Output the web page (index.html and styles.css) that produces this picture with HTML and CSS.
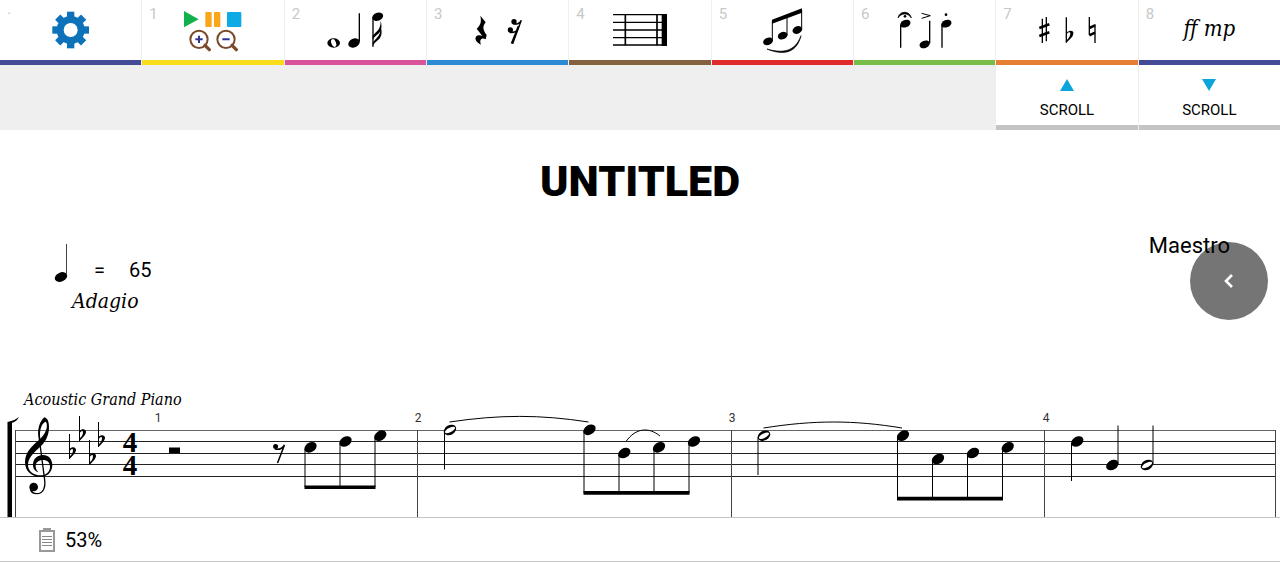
FILE: index.html
```html
<!DOCTYPE html>
<html lang="en">
<head>
    <meta charset="UTF-8">
    <meta name="viewport" content="width=device-width, initial-scale=1.0">
    <title>Untitled</title>
    <link rel="stylesheet" href="styles.css">
</head>
<body>
    <nav class="toolbar">
        <button class="tool navy" aria-label="Settings">
            <span class="key">·</span>
            <svg class="icon" viewBox="93 0 240 180">
                <g fill="#0d72b9">
                    <circle cx="212" cy="90" r="42"/>
                    <g id="teeth">
                        <rect x="201" y="35" width="22" height="110"/>
                        <rect x="157" y="79" width="110" height="22"/>
                    </g>
                    <use href="#teeth" transform="rotate(45 212 90)"/>
                </g>
                <circle cx="212" cy="90" r="21" fill="#fff"/>
            </svg>
        </button>
        <button class="tool yellow" aria-label="Playback and zoom">
            <span class="key">1</span>
            <svg class="icon" viewBox="519 0 240 180">
                <path d="M552 33L596 58L552 82Z" fill="#11b14b"/>
                <rect x="616" y="36" width="19" height="45" rx="3" fill="#faa61a"/>
                <rect x="642" y="36" width="19" height="45" rx="3" fill="#faa61a"/>
                <rect x="681" y="36" width="43" height="45" rx="3" fill="#0eaae6"/>
                <g fill="none" stroke="#7b4a2b">
                    <circle cx="597" cy="118" r="26" stroke-width="6"/>
                    <path d="M615 136L628 149" stroke-width="10" stroke-linecap="round"/>
                    <circle cx="678" cy="118" r="26" stroke-width="6"/>
                    <path d="M696 136L709 149" stroke-width="10" stroke-linecap="round"/>
                </g>
                <path d="M586 118H608M597 107V129M667 118H689" stroke="#2f3590" stroke-width="6"/>
            </svg>
        </button>
        <button class="tool pink" aria-label="Notes">
            <span class="key">2</span>
            <svg class="icon" viewBox="93 0 240 180">
                <ellipse cx="149" cy="129" rx="19" ry="14"/>
                <ellipse cx="149" cy="129" rx="7" ry="12" fill="#fff" transform="rotate(-20 149 129)"/>
                <ellipse cx="210" cy="129" rx="18" ry="13" transform="rotate(-25 210 129)"/>
                <path d="M226 125V40" stroke="#000" stroke-width="4"/>
                <ellipse cx="281" cy="50" rx="17" ry="12" transform="rotate(-20 281 50)"/>
                <path d="M267 52V140" stroke="#000" stroke-width="4"/>
                <path d="M266 108C272 96 291 92 290 62C296 84 290 96 281 103C275 108 270 112 266 119ZM266 130C271 116 292 110 290 80C297 101 290 114 282 120C275 126 270 131 266 138Z"/>
            </svg>
        </button>
        <button class="tool blue" aria-label="Rests">
            <span class="key">3</span>
            <svg class="icon" viewBox="521 0 240 180">
                <path d="M588 47L604 67C595 79 594 88 607 105L604 118C592 112 584 119 590 134C576 126 570 117 575 110C579 105 588 105 594 108L577 86C589 75 592 65 588 47Z"/>
                <circle cx="689" cy="65" r="8"/>
                <circle cx="678" cy="90" r="8"/>
                <path d="M687 72C698 74 706 70 711 61L685 131" fill="none" stroke="#000" stroke-width="4"/>
                <path d="M676 97C687 99 695 96 701 88" fill="none" stroke="#000" stroke-width="4"/>
                <path d="M682 131L703 78" stroke="#000" stroke-width="6"/>
            </svg>
        </button>
        <button class="tool brown" aria-label="Bars">
            <span class="key">4</span>
            <svg class="icon" viewBox="96 0 240 180">
                <path d="M135 44H296M135 67H296M135 90H296M135 113H296M135 135H296" stroke="#000" stroke-width="4"/>
                <path d="M172 43V136M267 43V136" stroke="#000" stroke-width="5"/>
                <rect x="281" y="42" width="16" height="96"/>
            </svg>
        </button>
        <button class="tool red" aria-label="Beams and slurs">
            <span class="key">5</span>
            <svg class="icon" viewBox="521 0 240 180">
                <path d="M611 59L701 25V38L611 71Z"/>
                <path d="M612 62V124M656 48V106M700 30V90" stroke="#000" stroke-width="3"/>
                <ellipse cx="599" cy="124" rx="15" ry="11" transform="rotate(-22 599 124)"/>
                <ellipse cx="643" cy="107" rx="15" ry="11" transform="rotate(-22 643 107)"/>
                <ellipse cx="687" cy="90" rx="15" ry="11" transform="rotate(-22 687 90)"/>
                <path d="M596 147C640 160 680 157 698 107C684 166 636 164 596 147Z" stroke="#000" stroke-width="2"/>
            </svg>
        </button>
        <button class="tool green" aria-label="Articulations">
            <span class="key">6</span>
            <svg class="icon" viewBox="104 0 240 180">
                <path d="M143 54C147 31 179 31 183 54C174 38 152 38 143 54Z" stroke="#000" stroke-width="2"/>
                <circle cx="164" cy="49" r="4"/>
                <ellipse cx="165" cy="71" rx="16" ry="11" transform="rotate(-22 165 71)"/>
                <path d="M151 74V143M238 62V130M275 74V143" stroke="#000" stroke-width="4"/>
                <path d="M214 40L240 47L214 55" fill="none" stroke="#000" stroke-width="3"/>
                <ellipse cx="223" cy="133" rx="16" ry="11" transform="rotate(-22 223 133)"/>
                <circle cx="287" cy="44" r="4"/>
                <ellipse cx="288" cy="71" rx="16" ry="11" transform="rotate(-22 288 71)"/>
            </svg>
        </button>
        <button class="tool orange" aria-label="Accidentals">
            <span class="key">7</span>
            <svg class="icon" viewBox="530 0 240 180">
                <path d="M576 56V129M588 51V124" stroke="#000" stroke-width="4"/>
                <path d="M567 84L597 73M567 108L597 97" stroke="#000" stroke-width="8"/>
                <path d="M648 52V128M717 51V105M734 73V129" stroke="#000" stroke-width="4"/>
                <path d="M649 97C660 88 671 92 669 101C667 113 656 118 649 128V121C660 112 662 98 658 97C654 96 651 99 649 103Z"/>
                <path d="M717 84L734 76M717 106L734 98" stroke="#000" stroke-width="8"/>
            </svg>
        </button>
        <button class="tool navy" aria-label="Dynamics">
            <span class="key">8</span>
            <span class="dynamics">ff mp</span>
        </button>
    </nav>

    <div class="subbar">
        <button class="scroll scroll-up">
            <svg class="arrow" viewBox="0 0 14 12"><path d="M7 0L14 12H0Z"/></svg>
            SCROLL
        </button>
        <button class="scroll">
            <svg class="arrow" viewBox="0 0 14 12"><path d="M0 0H14L7 12Z"/></svg>
            SCROLL
        </button>
    </div>

    <main class="score">
        <h1 class="title">UNTITLED</h1>
        <div class="credits">
            <div class="tempo">
                <div class="metronome">
                    <svg class="tempo-note" viewBox="0 0 14 40">
                        <ellipse cx="7" cy="33" rx="6.500" ry="4.500" transform="rotate(-25 7 33)"/>
                        <path d="M12.500 0V31" stroke="#444"/>
                    </svg>
                    <span class="equals">=</span>
                    <span>65</span>
                </div>
                <div class="tempo-name">Adagio</div>
            </div>
            <div class="composer">Maestro</div>
        </div>
        <button class="fab" aria-label="Open panel">
            <svg class="chevron" viewBox="0 0 10 16"><path d="M8 2L2 8L8 14" fill="none" stroke="#fff" stroke-width="2.6"/></svg>
        </button>

        <div class="instrument">Acoustic Grand Piano</div>
        <svg class="staff" viewBox="0 0 1280 107">
            <defs>
                <ellipse id="head" rx="6.6" ry="4.8" transform="rotate(-32)"/>
                <g id="half">
                    <ellipse rx="6.6" ry="4.8" transform="rotate(-30)"/>
                    <ellipse rx="5.6" ry="2.2" fill="#fff" transform="rotate(-27)"/>
                </g>
                <g id="flat">
                    <path d="M.5 -25V0" stroke="#000"/>
                    <path d="M.5 -10C3 -13 7.500 -12 7 -8.500C6 -5 3 -3 .5 0V-2.500C4 -5 4.500 -9 3.500 -10C2.500 -10.500 1.500 -9 .5 -8Z"/>
                </g>
            </defs>

            <!-- staff and bar lines -->
            <path d="M15 20.500H1276" stroke="#666"/>
            <path d="M15 31.500H1276M15 43.500H1276M15 54.500H1276M15 66.500H1276" stroke="#222"/>
            <path d="M15.500 20V107M417.500 20V107M731.500 20V107M1044.500 20V107M1275.500 20V107" stroke="#444"/>
            <path d="M7.500 107V12C13 11 16 9 19 7C17 11 14 12 12 13V107Z"/>

            <!-- treble clef -->
            <g transform="translate(0 -25) scale(.33333)">
                <path fill-rule="evenodd" d="M133 97C120 108 112 130 115 155L117 165C95 183 75 203 75 232C75 258 95 276 120 276C142 276 157 261 157 240C157 222 145 210 129 210C112 210 99 222 99 239C99 251 106 259 115 262C109 255 107 249 107 242C107 233 116 225 129 225C142 225 150 233 150 245C150 261 138 271 121 271C101 271 84 259 84 240C84 218 104 201 122 184C138 169 147 150 147 126C147 112 143 99 133 97ZM136 110C141 112 142 122 139 133C135 146 128 154 121 161C118 140 122 118 136 110Z"/>
                <path d="M118 162L134 285C137 310 128 326 111 326C100 326 93 320 91 312" fill="none" stroke="#000" stroke-width="4"/>
                <circle cx="101" cy="306" r="13"/>
            </g>

            <!-- key and time signature -->
            <use href="#flat" x="69" y="49"/>
            <use href="#flat" x="79" y="31"/>
            <use href="#flat" x="89" y="55"/>
            <use href="#flat" x="98" y="37"/>
            <text class="meter" x="130" y="42">4</text>
            <text class="meter" x="130" y="65">4</text>

            <g class="bar-number">
                <text x="158" y="12">1</text>
                <text x="418" y="12">2</text>
                <text x="732" y="12">3</text>
                <text x="1046" y="12">4</text>
            </g>

            <!-- bar 1 -->
            <path d="M169 37.500H180V43H169Z"/>
            <circle cx="275.600" cy="36.500" r="2.500"/>
            <path d="M275 39C279 40 282 39 284.500 35L277.500 53" fill="none" stroke="#000" stroke-width="1.500"/>
            <use href="#head" x="310.500" y="37.300"/>
            <use href="#head" x="345.500" y="31.500"/>
            <use href="#head" x="380.300" y="25.700"/>
            <path class="stem" d="M305 39V77M340 33V77M375 27V77"/>
            <path d="M304.500 75.500H375.500V79H304.500Z"/>

            <!-- bar 2 -->
            <use href="#half" x="450" y="20"/>
            <use href="#head" x="589.500" y="19.800"/>
            <use href="#head" x="624.300" y="43"/>
            <use href="#head" x="659" y="37.300"/>
            <use href="#head" x="694" y="31.500"/>
            <path class="stem" d="M444.500 21V59.500M584 21V83M619 45V83M654 39V83M689 33V83"/>
            <path d="M583.500 81H689.500V84.700H583.500Z"/>
            <path class="slur" d="M449.500 12C500 4.500 540 4.500 588.500 12M626 31.500C636 17.500 649 17 660 26"/>

            <!-- bar 3 -->
            <use href="#half" x="764" y="25.700"/>
            <use href="#head" x="903" y="25.700"/>
            <use href="#head" x="938" y="49"/>
            <use href="#head" x="973" y="43"/>
            <use href="#head" x="1007.700" y="37.300"/>
            <path class="stem" d="M758 27V65M897.500 27V88M932.500 51V88M967.500 45V88M1002.500 39V88"/>
            <path d="M897 86.700H1003V90.500H897Z"/>
            <path class="slur" d="M763.500 18C814 10 854 10 902 18"/>

            <!-- bar 4 -->
            <use href="#head" x="1077.300" y="31.500"/>
            <use href="#head" x="1112.300" y="55"/>
            <use href="#half" x="1147" y="55"/>
            <path class="stem" d="M1071.500 33V71M1118 15.500V54M1153 15.500V54"/>
        </svg>
    </main>

    <footer class="status">
        <svg class="battery" viewBox="0 0 16 24">
            <path d="M4 0H12V2H4Z" fill="#999"/>
            <path d="M1 3H15V23H1Z" fill="none" stroke="#999" stroke-width="2"/>
            <path d="M3 8.500H13M3 11.500H13M3 14.500H13M3 17.500H13" stroke="#888"/>
        </svg>
        <span>53%</span>
    </footer>
</body>
</html>
```
FILE: styles.css
```css
:root {
  --navy: #434a97;
  --yellow: #f9dd1c;
  --pink: #d9539b;
  --blue: #2d89d3;
  --brown: #86613f;
  --red: #e02b2a;
  --green: #78bd48;
  --orange: #e67e33;
  --line: #c4c4c4;
}
* {
  box-sizing: border-box;
}
body {
  margin: 0;
  font-family: Roboto, sans-serif;
  color: #000;
  background-color: #fff;
}
button {
  border: none;
  margin: 0;
  padding: 0;
  font-family: inherit;
  color: inherit;
  cursor: pointer;
}
.toolbar, .subbar {
  display: grid;
  grid-template-columns: repeat(9, 1fr);
  column-gap: 1px;
  background-color: #efefef;
}
.tool {
  position: relative;
  display: flex;
  align-items: center;
  justify-content: center;
  height: 65px;
  background-color: #fff;
  border-bottom: 5px solid;
}
.navy { border-color: var(--navy); }
.yellow { border-color: var(--yellow); }
.pink { border-color: var(--pink); }
.blue { border-color: var(--blue); }
.brown { border-color: var(--brown); }
.red { border-color: var(--red); }
.green { border-color: var(--green); }
.orange { border-color: var(--orange); }
.key {
  position: absolute;
  top: 5px;
  left: 7px;
  font-size: 15px;
  line-height: 18px;
  color: #c8c8c8;
}
.icon {
  width: 80px;
  height: 60px;
}
.dynamics {
  padding-bottom: 4px;
  font-family: "DejaVu Serif Condensed", "DejaVu Serif", serif;
  font-size: 22px;
  font-style: italic;
}
.scroll {
  display: flex;
  flex-direction: column;
  align-items: center;
  height: 65px;
  padding-top: 14px;
  gap: 10px;
  font-size: 15px;
  line-height: 18px;
  background-color: #fff;
  border-bottom: 5px solid var(--line);
}
.scroll-up {
  grid-column: 8;
}
.arrow {
  width: 14px;
  height: 12px;
  fill: #0ba5dc;
}

/* score */
.score {
  position: relative;
  padding-top: 25px;
}
.title {
  margin: 0 0 26px;
  font-size: 43px;
  line-height: 52px;
  font-weight: 900;
  text-align: center;
}
.credits {
  display: flex;
  justify-content: space-between;
  height: 157px;
  padding: 0 50px;
}
.tempo {
  padding-top: 9px;
}
.metronome {
  display: flex;
  align-items: center;
  height: 44px;
  padding: 0 4px;
  font-size: 20px;
  line-height: 24px;
}
.metronome span {
  margin-top: 12px;
}
.tempo-note {
  width: 14px;
  height: 40px;
}
.metronome .equals {
  margin-left: 26px;
  margin-right: 24px;
}
.tempo-name {
  padding-left: 22px;
  font-family: "DejaVu Serif Condensed", "DejaVu Serif", serif;
  font-size: 21px;
  line-height: 30px;
  font-style: italic;
}
.composer {
  font-size: 22px;
  line-height: 26px;
}
.fab {
  position: absolute;
  top: 112px;
  right: 12px;
  width: 78px;
  height: 78px;
  display: grid;
  place-items: center;
  border-radius: 50%;
  background-color: rgba(0, 0, 0, 0.54);
}
.chevron {
  width: 10px;
  height: 16px;
}
.instrument {
  padding-left: 24px;
  font-family: "DejaVu Serif Condensed", "DejaVu Serif", serif;
  font-size: 16px;
  line-height: 20px;
  font-style: italic;
}
.staff {
  display: block;
  width: 100%;
}
.stem {
  stroke: #000;
  stroke-width: 1px;
}
.slur {
  fill: none;
  stroke: #000;
  stroke-width: 1px;
}
.bar-number {
  font-size: 12px;
  fill: #333;
  text-anchor: middle;
}
.meter {
  font-family: "Liberation Serif", serif;
  font-size: 29px;
  font-weight: bold;
  text-anchor: middle;
}
.status {
  display: flex;
  align-items: center;
  gap: 10px;
  height: 45px;
  padding-left: 39px;
  font-size: 20px;
  border-top: 1px solid var(--line);
  border-bottom: 1px solid var(--line);
}
.battery {
  width: 16px;
  height: 24px;
}
```
